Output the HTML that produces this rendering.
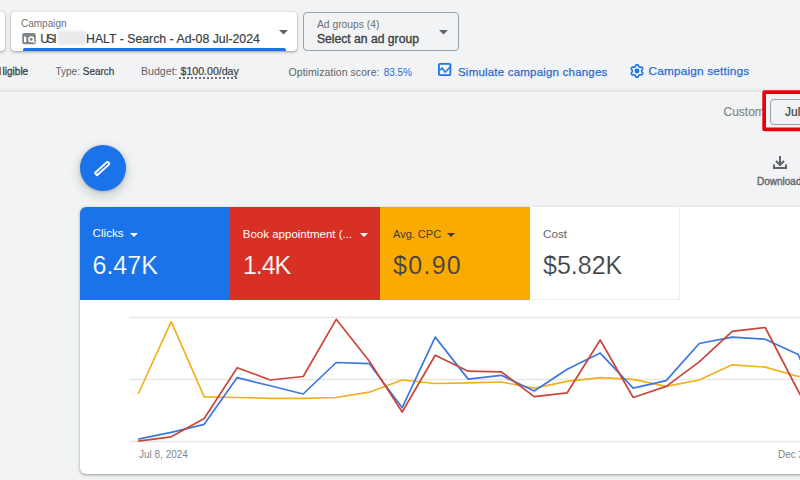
<!DOCTYPE html>
<html><head><meta charset="utf-8">
<style>
html,body{margin:0;padding:0;}
body{width:800px;height:480px;overflow:hidden;position:relative;background:#f1f3f4;font-family:"Liberation Sans",sans-serif;color:#3c4043;}
.a{position:absolute;white-space:nowrap;}
.box{position:absolute;background:#fff;border-radius:4px;box-shadow:0 1px 2px rgba(60,64,67,.3),0 1px 3px 1px rgba(60,64,67,.15);}
.lbl{font-size:10px;color:#6c7075;}
.g{color:#5f6368;}
.blue{color:#2f6bd0;}
</style></head><body>

<!-- top bar -->
<div class="box" style="left:-30px;top:12px;width:34.5px;height:39px;"></div>
<div class="box" style="left:11px;top:12px;width:286px;height:39px;overflow:hidden;">
  <div class="a lbl" style="left:10px;top:6px;line-height:12px;">Campaign</div>
  <svg class="a" style="left:11px;top:20.5px" width="14" height="12" viewBox="0 0 14 12">
    <rect x="0.2" y="0" width="13.6" height="11.3" rx="2" fill="#80868b"/>
    <rect x="2" y="3.6" width="2.2" height="5.6" fill="#fff"/>
    <circle cx="9.2" cy="6.2" r="2.3" fill="none" stroke="#fff" stroke-width="1.5"/>
    <path d="M10.6 7.8 L12.5 9.8" stroke="#fff" stroke-width="1.5"/>
  </svg>
  <div class="a" style="left:29.3px;top:20px;font-size:12.3px;line-height:14px;color:#3c4043;-webkit-text-stroke:0.2px #3c4043;">U</div><div class="a" style="left:35.6px;top:20px;font-size:12.3px;line-height:14px;color:#3c4043;-webkit-text-stroke:0.2px #3c4043;">S</div><div class="a" style="left:42.2px;top:20px;font-size:12.3px;line-height:14px;color:#3c4043;-webkit-text-stroke:0.2px #3c4043;">I</div>
  <div class="a" style="left:47px;top:18.5px;width:27.5px;height:14px;background:#e9eaeb;filter:blur(0.8px);"></div>
  <div class="a" style="left:75px;top:20px;font-size:12.3px;line-height:14px;color:#3c4043;-webkit-text-stroke:0.2px #3c4043;">HALT - Search - Ad-08 Jul-2024</div>
  <svg class="a" style="left:268px;top:18px" width="9" height="5" viewBox="0 0 9 5"><path d="M0 0H9L4.5 4.5Z" fill="#5f6368"/></svg>
  <div class="a" style="left:11.7px;top:36px;width:263px;height:4px;background:#1a73e8;border-radius:2px 2px 0 0;"></div>
</div>
<div class="a" style="left:303px;top:12px;width:154px;height:37px;border:1px solid #9aa0a6;border-radius:4px;">
  <div class="a lbl" style="left:13px;top:6px;font-size:10.3px;line-height:12px;">Ad groups (4)</div>
  <div class="a" style="left:13px;top:18.5px;font-size:12.15px;line-height:14px;-webkit-text-stroke:0.35px #3c4043;color:#3c4043;">Select an ad group</div>
  <svg class="a" style="left:135px;top:17px" width="9" height="5" viewBox="0 0 9 5"><path d="M0 0H9L4.5 4.5Z" fill="#5f6368"/></svg>
</div>

<!-- info row -->
<div class="a" style="left:0;top:67px;width:1.4px;height:8px;background:#5f6368;opacity:.8;"></div><div class="a" style="left:2.6px;top:65.5px;font-size:10px;line-height:12px;color:#3c4043;-webkit-text-stroke:0.3px #3c4043;">ligible</div>
<div class="a" style="left:55.5px;top:66.2px;font-size:10px;line-height:12px;"><span class="g">Type:</span> <span style="-webkit-text-stroke:0.2px #3c4043;">Search</span></div>
<div class="a" style="left:141px;top:64.7px;font-size:10.6px;line-height:12px;"><span class="g">Budget:</span> <span style="-webkit-text-stroke:0.2px #3c4043;">$100.00/day</span></div><div class="a" style="left:179.4px;top:77.1px;width:59.5px;height:1.7px;background:repeating-linear-gradient(90deg,#6f7377 0 2.2px,transparent 2.2px 4.02px);"></div>
<div class="a" style="left:288.5px;top:66px;font-size:10.5px;line-height:12px;"><span class="g" style="letter-spacing:0.06px">Optimization score:</span> <span class="blue" style="margin-left:1.2px;font-size:10px;">83.5%</span></div>
<svg class="a" style="left:438px;top:63px" width="14" height="13" viewBox="0 0 14 13"><rect x="0.9" y="0.9" width="11.5" height="11.2" rx="1.2" fill="none" stroke="#1a73e8" stroke-width="1.8"/><path d="M1.5 7.5 L4.2 5.2 L7.2 9.2 L12.3 3.8" fill="none" stroke="#1a73e8" stroke-width="1.5"/></svg>
<div class="a blue" style="left:458px;top:64.6px;font-size:11.5px;line-height:14px;letter-spacing:0.2px;-webkit-text-stroke:0.25px #2f6bd0;">Simulate campaign changes</div>
<svg class="a" style="left:630px;top:64px" width="14" height="14" viewBox="0 0 14 14"><path d="M11.70 7.00 L11.70 6.84 L11.69 6.67 L11.67 6.51 L11.65 6.35 L11.70 6.17 L11.92 5.95 L12.15 5.72 L12.37 5.46 L12.58 5.19 L12.76 4.91 L12.75 4.68 L12.66 4.48 L12.57 4.28 L12.47 4.09 L12.37 3.90 L12.26 3.71 L12.14 3.53 L12.02 3.36 L11.89 3.18 L11.69 3.06 L11.36 3.07 L11.02 3.12 L10.69 3.18 L10.37 3.26 L10.07 3.34 L9.89 3.30 L9.76 3.20 L9.63 3.10 L9.49 3.01 L9.35 2.93 L9.21 2.85 L9.06 2.78 L8.91 2.71 L8.76 2.64 L8.63 2.51 L8.56 2.21 L8.46 1.90 L8.35 1.57 L8.22 1.26 L8.06 0.97 L7.86 0.86 L7.65 0.83 L7.43 0.82 L7.22 0.80 L7.00 0.80 L6.78 0.80 L6.57 0.82 L6.35 0.83 L6.14 0.86 L5.94 0.97 L5.78 1.26 L5.65 1.57 L5.54 1.90 L5.44 2.21 L5.37 2.51 L5.24 2.64 L5.09 2.71 L4.94 2.78 L4.79 2.85 L4.65 2.93 L4.51 3.01 L4.37 3.10 L4.24 3.20 L4.11 3.30 L3.93 3.34 L3.63 3.26 L3.31 3.18 L2.98 3.12 L2.64 3.07 L2.31 3.06 L2.11 3.18 L1.98 3.36 L1.86 3.53 L1.74 3.71 L1.63 3.90 L1.53 4.09 L1.43 4.28 L1.34 4.48 L1.25 4.68 L1.24 4.91 L1.42 5.19 L1.63 5.46 L1.85 5.72 L2.08 5.95 L2.30 6.17 L2.35 6.35 L2.33 6.51 L2.31 6.67 L2.30 6.84 L2.30 7.00 L2.30 7.16 L2.31 7.33 L2.33 7.49 L2.35 7.65 L2.30 7.83 L2.08 8.05 L1.85 8.28 L1.63 8.54 L1.42 8.81 L1.24 9.09 L1.25 9.32 L1.34 9.52 L1.43 9.72 L1.53 9.91 L1.63 10.10 L1.74 10.29 L1.86 10.47 L1.98 10.64 L2.11 10.82 L2.31 10.94 L2.64 10.93 L2.98 10.88 L3.31 10.82 L3.63 10.74 L3.93 10.66 L4.11 10.70 L4.24 10.80 L4.37 10.90 L4.51 10.99 L4.65 11.07 L4.79 11.15 L4.94 11.22 L5.09 11.29 L5.24 11.36 L5.37 11.49 L5.44 11.79 L5.54 12.10 L5.65 12.43 L5.78 12.74 L5.94 13.03 L6.14 13.14 L6.35 13.17 L6.57 13.18 L6.78 13.20 L7.00 13.20 L7.22 13.20 L7.43 13.18 L7.65 13.17 L7.86 13.14 L8.06 13.03 L8.22 12.74 L8.35 12.43 L8.46 12.10 L8.56 11.79 L8.63 11.49 L8.76 11.36 L8.91 11.29 L9.06 11.22 L9.21 11.15 L9.35 11.07 L9.49 10.99 L9.63 10.90 L9.76 10.80 L9.89 10.70 L10.07 10.66 L10.37 10.74 L10.69 10.82 L11.02 10.88 L11.36 10.93 L11.69 10.94 L11.89 10.82 L12.02 10.64 L12.14 10.47 L12.26 10.29 L12.37 10.10 L12.47 9.91 L12.57 9.72 L12.66 9.52 L12.75 9.32 L12.76 9.09 L12.58 8.81 L12.37 8.54 L12.15 8.28 L11.92 8.05 L11.70 7.83 L11.65 7.65 L11.67 7.49 L11.69 7.33 L11.70 7.16Z" fill="none" stroke="#1a73e8" stroke-width="1.6" stroke-linejoin="round"/><circle cx="7" cy="7" r="2.4" fill="#1a73e8"/></svg>
<div class="a blue" style="left:648.5px;top:64.4px;font-size:11.8px;line-height:14px;letter-spacing:0.18px;-webkit-text-stroke:0.25px #2f6bd0;">Campaign settings</div>

<div class="a" style="left:0;top:88px;width:800px;height:2.3px;background:#eeeff1;"></div><div class="a" style="left:0;top:90.3px;width:800px;height:1.4px;background:#e3e4e6;"></div>

<!-- date -->
<div class="a" style="left:723.5px;top:105px;font-size:12px;line-height:14px;color:#80868b;-webkit-text-stroke:0.15px #80868b;">Custom</div>
<div class="a" style="left:770px;top:99px;width:40px;height:24px;border:1px solid #9aa0a6;border-radius:4px;"></div>
<div class="a" style="left:785px;top:105px;font-size:12px;line-height:14px;color:#3c4043;-webkit-text-stroke:0.2px #3c4043;">Jul</div>
<svg class="a" style="left:740px;top:80px" width="60" height="60" viewBox="740 80 60 60"><rect x="764.15" y="92.15" width="60" height="37.2" rx="0.4" fill="none" stroke="#e8000b" stroke-width="3.7"/></svg>

<!-- fab -->
<div class="a" style="left:80px;top:145px;width:46px;height:46px;border-radius:50%;background:#1a73e8;box-shadow:0 1px 3px rgba(60,64,67,.3),0 4px 8px 3px rgba(60,64,67,.15);"></div>
<svg class="a" style="left:80px;top:145px" width="46" height="46" viewBox="0 0 46 46"><g transform="translate(22.2,23.5) rotate(-42)"><path d="M-8.4,-1.6 L7.2,-1.6 Q8.8,-1.6 8.8,0 Q8.8,1.6 7.2,1.6 L-8.4,1.6 Z" fill="none" stroke="#fff" stroke-width="1.9" stroke-linejoin="round"/></g></svg>

<!-- download -->
<svg class="a" style="left:771px;top:154px" width="18" height="18" viewBox="0 0 18 18">
  <path d="M9 2 V10.5" stroke="#5f6368" stroke-width="2"/>
  <path d="M5 7 L9 11 L13 7" fill="none" stroke="#5f6368" stroke-width="2"/>
  <path d="M3 10.5 V14 H15 V10.5" fill="none" stroke="#5f6368" stroke-width="2"/>
</svg>
<div class="a g" style="left:757px;top:175.5px;font-size:10px;line-height:12px;-webkit-text-stroke:0.35px #5f6368;">Download</div>

<!-- card -->
<div class="box" style="left:80px;top:207px;width:760px;height:267px;border-radius:6px;overflow:hidden;">
  <div class="a" style="left:0;top:0;width:150px;height:93px;background:#1a73e8;"></div>
  <div class="a" style="left:150px;top:0;width:150px;height:93px;background:#d93025;"></div>
  <div class="a" style="left:300px;top:0;width:150px;height:93px;background:#f9ab00;"></div>
  <div class="a" style="left:450px;top:0;width:149px;height:92px;background:#fff;border-right:1px solid #edeef0;border-bottom:1px solid #edeef0;"></div>

  <div class="a" style="left:12.5px;top:19px;font-size:11.7px;line-height:14px;color:#fff;">Clicks</div>
  <svg class="a" style="left:50px;top:25.5px" width="8" height="4" viewBox="0 0 8 4"><path d="M0 0H8L4 4Z" fill="#fff"/></svg>
  <div class="a" style="left:12.5px;top:43.2px;font-size:25px;line-height:30px;color:#fff;-webkit-text-stroke:0.2px #1a73e8;">6.47K</div>

  <div class="a" style="left:162.8px;top:19.5px;font-size:11.5px;line-height:14px;color:#fff;">Book appointment (...</div>
  <svg class="a" style="left:279.5px;top:26px" width="8" height="4" viewBox="0 0 8 4"><path d="M0 0H8L4 4Z" fill="#fff"/></svg>
  <div class="a" style="left:163px;top:43.2px;font-size:25px;line-height:30px;color:#fff;letter-spacing:-1.1px;-webkit-text-stroke:0.2px #d93025;">1.4K</div>

  <div class="a" style="left:313px;top:20px;font-size:11px;line-height:14px;color:#3c4043;">Avg. CPC</div>
  <svg class="a" style="left:367px;top:26px" width="8" height="4" viewBox="0 0 8 4"><path d="M0 0H8L4 4Z" fill="#3c4043"/></svg>
  <div class="a" style="left:313px;top:43.2px;font-size:25px;line-height:30px;color:#3c4043;letter-spacing:1.3px;-webkit-text-stroke:0.2px #f9ab00;">$0.90</div>

  <div class="a" style="left:463px;top:19.5px;font-size:11.7px;line-height:14px;color:#5f6368;">Cost</div>
  <div class="a" style="left:463px;top:43.2px;font-size:25px;line-height:30px;color:#3c4043;-webkit-text-stroke:0.2px #fff;">$5.82K</div>
</div>

<!-- chart -->
<svg class="a" style="left:0;top:0" width="800" height="480" viewBox="0 0 800 480">
  <g stroke="#e6e6e6" stroke-width="1.6">
    <path d="M129 317.5H800"/>
    <path d="M129 379.5H800"/>
    <path d="M129 441.5H800"/>
  </g>
  <g fill="none" stroke-width="1.7" stroke-linejoin="round">
    <polyline id="ly" stroke="#f2b01e" points="138.2,394 171.2,321.7 204.2,396.9 237.2,397.5 270.2,398.3 303.2,398.3 336.2,397.5 369.2,392.2 402.2,380 435.2,383.5 468.2,382.9 501.2,382 534.2,388.1 567.2,381.4 600.2,377.6 633.2,379.4 666.2,386.4 699.2,380 732.2,364.8 765.2,367.1 798.2,376.5 831.2,376"/>
    <polyline id="lb" stroke="#3b78e0" points="138.2,439.2 171.2,432.4 204.2,424.3 237.2,377.6 270.2,385.8 303.2,394 336.2,362.5 369.2,363.6 402.2,407.7 435.2,337.1 468.2,379.1 501.2,375.3 534.2,391 567.2,369.2 600.2,353.1 633.2,388.1 666.2,380.6 699.2,343.5 732.2,337.1 765.2,339.2 798.2,354.5 831.2,430"/>
    <polyline id="lr" stroke="#c9463b" points="138.2,441.2 171.2,436.8 204.2,418.5 237.2,367.7 270.2,380 303.2,376.5 336.2,319.3 369.2,361 402.2,412 435.2,355.2 468.2,371.2 501.2,371.8 534.2,396.6 567.2,392.8 600.2,340 633.2,397.5 666.2,386.4 699.2,361.9 732.2,331.3 765.2,327.5 798.2,391 831.2,450"/>
  </g>
</svg>
<div class="a g" style="left:139px;top:449px;font-size:10px;line-height:12px;color:#80868b;">Jul 8, 2024</div>
<div class="a g" style="left:778px;top:449px;font-size:10px;line-height:12px;color:#80868b;">Dec 2</div>

</body></html>
